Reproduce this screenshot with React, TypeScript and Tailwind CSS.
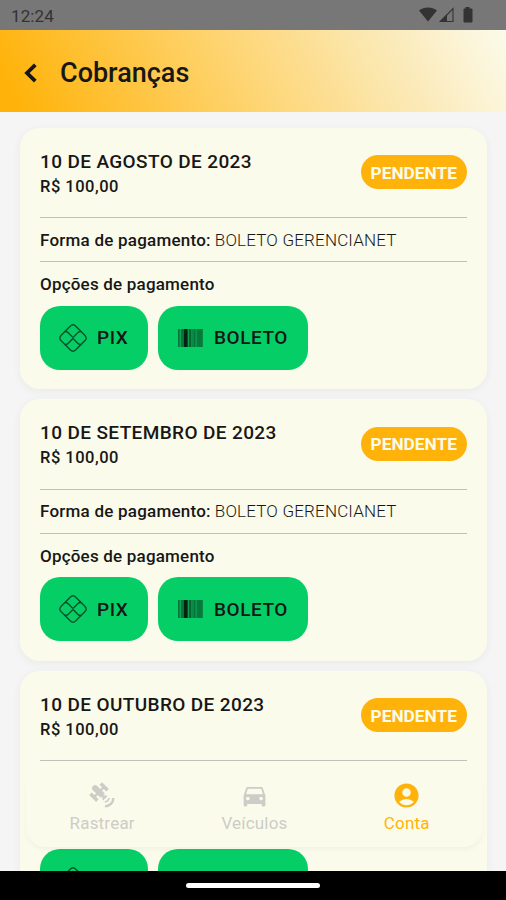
import { MdAccountCircle, MdDirectionsCar } from "react-icons/md";

type Charge = {
  date: string;
  value: string;
};

const charges: Charge[] = [
  { date: "10 DE AGOSTO DE 2023", value: "R$ 100,00" },
  { date: "10 DE SETEMBRO DE 2023", value: "R$ 100,00" },
  { date: "10 DE OUTUBRO DE 2023", value: "R$ 100,00" },
];

const StatusBar = () => (
  <div className="flex h-[30px] shrink-0 items-center justify-between bg-[#777777] pl-[11px] pr-[33px] text-[#333333]">
    <span className="pt-[2px] text-[17px] leading-none tracking-[0.1px]">12:24</span>
    <svg width="54" height="16" viewBox="0 0 54 16" fill="currentColor">
      <path d="M0 3.4C4.800 -0.6 13.200 -0.6 18 3.400L9 14.500Z" />
      <path d="M34 1.500V14.500H21.500Z" fill="none" stroke="currentColor" strokeWidth="1.100" />
      <path d="M20 15L28 7V15Z" />
      <path d="M46.500 0h4v1.500h2q1 0 1 1v12q0 1-1 1h-7q-1 0-1-1v-12q0-1 1-1h1z" />
    </svg>
  </div>
);

const Header = () => (
  <header className="flex h-[82px] shrink-0 items-center bg-[linear-gradient(62deg,#ffb30a_4%,#fed36d_45%,#fbe9b5_76%,#fbfbeb_100%)] pl-[23px] text-[#171717]">
    <button className="mt-1 h-5 w-[15px]">
      <svg width="15" height="20" viewBox="0 0 15 20" fill="none" stroke="currentColor" strokeWidth="3.800">
        <path d="M12.300 1.800L4 10L12.300 18.200" />
      </svg>
    </button>
    <h1 className="ml-[22px] mt-[3px] text-[27px] font-medium leading-8">Cobranças</h1>
  </header>
);

const PixIcon = () => (
  <svg width="28" height="28" viewBox="0 0 28 28" fill="none" stroke="#07502a" strokeWidth="1.400">
    <path d="M11.200 2.200Q14 -0.600 16.800 2.200L25.800 11.200Q28.600 14 25.800 16.800L16.800 25.800Q14 28.600 11.200 25.800L2.200 16.800Q-0.600 14 2.200 11.200Z" />
    <path d="M5.800 7.600Q7.800 7.400 9 8.600L13.200 12.800Q14 13.500 14.800 12.800L19 8.600Q20.200 7.400 22.200 7.600" />
    <path d="M5.800 20.400Q7.800 20.600 9 19.400L13.200 15.200Q14 14.500 14.800 15.200L19 19.400Q20.200 20.600 22.200 20.400" />
  </svg>
);

const BarcodeIcon = () => (
  <svg width="25" height="18" viewBox="0 0 25 18">
    <rect width="25" height="18" fill="#078a43" />
    <rect width="1" height="18" fill="#06733a" />
    <rect x="2" width="1" height="18" fill="#05a951" />
    <rect x="3" width="3" height="18" fill="#087238" />
    <rect x="6" width="3" height="18" fill="#032412" />
    <rect x="9" width="1" height="18" fill="#065228" />
    <rect x="10" width="1" height="18" fill="#05a04e" />
    <rect x="11" width="2" height="18" fill="#066030" />
    <rect x="13" width="1" height="18" fill="#059148" />
    <rect x="16" width="1" height="18" fill="#06733a" />
    <rect x="18" width="1" height="18" fill="#059a4b" />
    <rect x="19" width="5" height="18" fill="#07793b" />
  </svg>
);

const ChargeCard = ({ charge }: { charge: Charge }) => (
  <article className="h-[261.500px] shrink-0 rounded-[20px] bg-[#fbfbeb] px-5 pt-[22px] text-[#171717] shadow-[0_2px_10px_rgba(0,0,0,0.05)]">
    <div className="flex h-[67.500px] items-start justify-between">
      <div>
        <h2 className="text-[19px] font-medium leading-6 tracking-[0.380px]">{charge.date}</h2>
        <p className="mt-[1px] text-[16.500px] font-medium leading-6 tracking-[0.500px]">{charge.value}</p>
      </div>
      <span className="mt-[5.500px] flex h-[34px] w-[106.500px] items-center justify-center rounded-full bg-[#ffb30a] pt-[3px] text-[17.300px] font-bold text-[#fbfbeb]">
        PENDENTE
      </span>
    </div>
    <p className="flex h-[45px] items-center gap-1 whitespace-nowrap border-y border-[#c0c1b8] pt-[2px] text-[17px]">
      <span className="font-medium tracking-[0.230px]">Forma de pagamento:</span>
      <span className="font-light tracking-[0.180px]">BOLETO GERENCIANET</span>
    </p>
    <p className="mt-[10px] text-[17px] font-medium leading-6 tracking-[0.200px]">Opções de pagamento</p>
    <div className="mt-[9.500px] flex gap-[10px] text-[19px] font-medium tracking-[0.550px]">
      <button className="flex h-16 w-[108px] items-center rounded-[20px] bg-[#06ce66] pl-[19px]">
        <PixIcon />
        <span className="ml-[10px] pt-[2px]">PIX</span>
      </button>
      <button className="flex h-16 w-[150px] items-center rounded-[20px] bg-[#06ce66] pl-5">
        <BarcodeIcon />
        <span className="ml-[11px] pt-[2px]">BOLETO</span>
      </button>
    </div>
  </article>
);

const SatelliteIcon = () => (
  <svg width="29" height="29" viewBox="0 0 24 24" fill="currentColor">
    <path d="M11.620 1L17.280 6.670L15.160 8.790L13.040 6.670L11.620 8.090L13.950 10.410L12.790 11.580L13.240 12.040C14.170 11.610 15.310 11.770 16.070 12.540L12.540 16.070C11.770 15.310 11.610 14.170 12.040 13.240L11.580 12.790L10.410 13.950L8.090 11.620L6.670 13.040L8.790 15.160L6.670 17.280L1 11.620L3.140 9.500L5.260 11.620L6.670 10.210L3.840 7.380C3.060 6.600 3.060 5.330 3.840 4.550L4.550 3.840C5.330 3.060 6.600 3.060 7.380 3.840L10.210 6.670L11.620 5.260L9.500 3.140L11.620 1M18 14A4 4 0 0 1 14 18V16.500A2.500 2.500 0 0 0 16.500 14H18M22 14A8 8 0 0 1 14 22V20A6 6 0 0 0 20 14H22Z" />
  </svg>
);

// Floats over the scrolled list
const TabBar = () => (
  <nav className="absolute bottom-[53px] left-[26px] right-[23px] grid h-[78px] grid-cols-3 rounded-[20px] bg-[#fbfbeb] text-[17px] text-[#cccdc6] shadow-[0_3px_5px_rgba(0,0,0,0.035)]">
    <button className="flex flex-col items-center pt-[11.500px]">
      <SatelliteIcon />
      <span className="pt-[1px] leading-6 tracking-[0.200px]">Rastrear</span>
    </button>
    <button className="flex flex-col items-center pt-[11.500px]">
      <MdDirectionsCar size={29} />
      <span className="pt-[1px] leading-6 tracking-[0.200px]">Veículos</span>
    </button>
    <button className="flex flex-col items-center pt-[11.500px] text-[#ffb30a]">
      <MdAccountCircle size={29} />
      <span className="pt-[1px] leading-6 tracking-[0.200px]">Conta</span>
    </button>
  </nav>
);

export default function App() {
  return (
    <div className="relative flex h-[900px] w-[506px] flex-col overflow-hidden bg-[#f5f5f5] font-['Roboto',sans-serif]">
      <StatusBar />
      <Header />
      <main className="flex min-h-0 flex-1 flex-col gap-[10px] overflow-hidden pl-5 pr-[19px] pt-[15.500px]">
        {charges.map((charge) => (
          <ChargeCard key={charge.date} charge={charge} />
        ))}
      </main>
      <TabBar />
      <div className="flex h-[29px] shrink-0 items-center justify-center bg-black">
        <div className="h-[5px] w-[134px] rounded-full bg-white" />
      </div>
    </div>
  );
}
